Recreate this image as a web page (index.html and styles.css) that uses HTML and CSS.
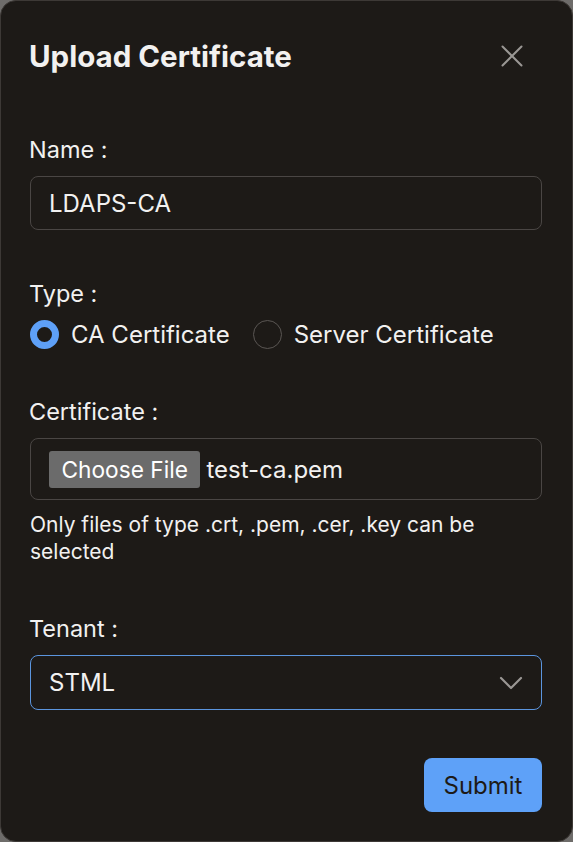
FILE: index.html
```html
<!DOCTYPE html>
<html>
<head>
<meta charset="utf-8">
<link rel="stylesheet" href="styles.css">
</head>
<body>
<div class="modal">
  <div class="header">
    <h1 class="title">Upload Certificate</h1>
    <button class="close" aria-label="Close">
      <svg width="24" height="24" viewBox="0 0 24 24"><path d="M2.5 2.5 L21.5 21.5 M21.5 2.5 L2.5 21.5" stroke="#9a9794" stroke-width="2" fill="none" stroke-linecap="round"/></svg>
    </button>
  </div>

  <div class="field name-field">
    <div class="label">Name :</div>
    <div class="input">LDAPS-CA</div>
  </div>

  <div class="field type-field">
    <div class="label">Type :</div>
    <div class="radios">
      <div class="radio"><span class="dot checked"></span><span>CA Certificate</span></div>
      <div class="radio"><span class="dot"></span><span>Server Certificate</span></div>
    </div>
  </div>

  <div class="field cert-field">
    <div class="label">Certificate :</div>
    <div class="input file">
      <span class="choose">Choose File</span><span class="fname">test-ca.pem</span>
    </div>
    <div class="help">Only files of type .crt, .pem, .cer, .key can be selected</div>
  </div>

  <div class="field tenant-field">
    <div class="label">Tenant :</div>
    <div class="input select">
      <span>STML</span>
      <svg width="24" height="14" viewBox="0 0 24 14"><path d="M2 2 L12 12 L22 2" stroke="#9a9794" stroke-width="2.2" fill="none" stroke-linecap="round" stroke-linejoin="round"/></svg>
    </div>
  </div>

  <div class="footer">
    <button class="submit">Submit</button>
  </div>
</div>
</body>
</html>
```

FILE: styles.css
```css
html, body {
  margin: 0;
  padding: 0;
  background: #6e6c6a;
}
body {
  font-family: "Inter", "Noto Sans", sans-serif;
  color: #f2f1f0;
}
.modal {
  box-sizing: border-box;
  width: 573px;
  height: 842px;
  background: #1d1a17;
  border: 1px solid #3d3936;
  border-radius: 16px;
  padding: 0 30px 0 29px;
  display: flex;
  flex-direction: column;
}
.header {
  display: flex;
  align-items: center;
  justify-content: space-between;
  height: 110px;
}
.title {
  margin: 0 0 0 -1px;
  font-size: 29.5px;
  font-weight: 700;
}
.close {
  background: none;
  border: none;
  padding: 0;
  margin-right: 18px;
  width: 24px;
  height: 24px;
  display: flex;
}
.label {
  font-size: 23.5px;
  line-height: 32px;
  margin-bottom: 10px;
  margin-left: -1px;
}
.name-field {
  margin-top: 23px;
}
.input {
  box-sizing: border-box;
  height: 54px;
  border: 1px solid #4a4644;
  border-radius: 8px;
  padding: 0 18px;
  display: flex;
  align-items: center;
  font-size: 24px;
}
.type-field {
  margin-top: 48px;
}
.type-field .label {
  margin-bottom: 8px;
}
.radios {
  display: flex;
  gap: 23px;
  font-size: 24px;
  height: 32px;
}
.radio {
  display: flex;
  align-items: center;
  gap: 12px;
}
.dot {
  box-sizing: border-box;
  width: 29px;
  height: 29px;
  border-radius: 50%;
  border: 1px solid #5a5653;
}
.dot.checked {
  border: 7.5px solid #5ea0f7;
}
.cert-field {
  margin-top: 46px;
}
.file {
  height: 62px;
}
.choose {
  background: #6b6b6b;
  color: #fff;
  border-radius: 3px;
  height: 37px;
  padding: 0 12.5px;
  display: flex;
  align-items: center;
  font-size: 22.7px;
  margin-right: 6px;
}
.help {
  font-size: 21px;
  line-height: 27px;
  margin-top: 11px;
}
.tenant-field {
  margin-top: 48px;
}
.select {
  height: 55px;
  border-color: #5b95de;
  justify-content: space-between;
  padding-right: 18px;
}
.footer {
  display: flex;
  justify-content: flex-end;
  margin-top: 48px;
}
.submit {
  background: #5ea1f8;
  color: #1d1a17;
  border: none;
  border-radius: 8px;
  font-family: "Inter", "Noto Sans", sans-serif;
  font-size: 24px;
  width: 118px;
  height: 54px;
  padding: 0;
}
```
